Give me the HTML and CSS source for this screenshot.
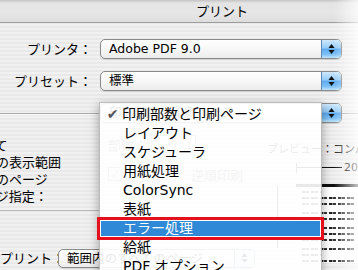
FILE: index.html
```html
<!DOCTYPE html>
<html lang="ja">
<head>
    <meta charset="UTF-8">
    <title>プリント</title>
    <link rel="stylesheet" href="styles.css">
</head>
<body>
    <div class="titlebar"><span class="title">プリント</span></div>

    <div class="form">
        <div class="row">
            <span class="label">プリンタ：</span>
            <div class="popup">
                <span class="popup-text">Adobe PDF 9.0</span>
                <span class="stepper">
                    <svg width="7" height="12" viewBox="0 0 7 12"><path d="M0.5 5 L3.5 1 L6.5 5 Z M0.5 7 L3.5 11 L6.5 7 Z" fill="#111"/></svg>
                </span>
            </div>
        </div>
        <div class="row">
            <span class="label">プリセット：</span>
            <div class="popup">
                <span class="popup-text">標準</span>
                <span class="stepper">
                    <svg width="7" height="12" viewBox="0 0 7 12"><path d="M0.5 5 L3.5 1 L6.5 5 Z M0.5 7 L3.5 11 L6.5 7 Z" fill="#111"/></svg>
                </span>
            </div>
        </div>
        <div class="row row-pane">
            <span class="label"></span>
            <div class="popup">
                <span class="popup-text">印刷部数と印刷ページ</span>
                <span class="stepper">
                    <svg width="7" height="12" viewBox="0 0 7 12"><path d="M0.5 5 L3.5 1 L6.5 5 Z M0.5 7 L3.5 11 L6.5 7 Z" fill="#111"/></svg>
                </span>
            </div>
        </div>
    </div>

    <div class="panel">
        <div class="ranges">
            <div>すべて</div>
            <div>現在の表示範囲</div>
            <div>現在のページ</div>
            <div>ページ指定：</div>
        </div>

        <div class="copies">
            <div class="copies-row"><span>部数：</span><span class="field">1</span></div>
            <div class="copies-row"><span class="checkbox">✓</span><span>丁合い</span><span class="spacer"></span><span>逆順印刷</span></div>
        </div>

        <div class="preview">
            <div class="preview-label">プレビュー：コンパクト</div>
            <div class="dim-h"><span class="dim-line"></span><span class="dim-text">209.9 mm</span></div>
            <div class="sheet">
                <div class="dim-v"></div>
                <div class="page">
                    <div class="txt short"></div>
                    <div class="txt"></div>
                    <div class="txt gap"></div>
                    <div class="txt"></div>
                    <div class="txt gap"></div>
                    <div class="txt"></div>
                    <div class="txt"></div>
                    <div class="txt gap"></div>
                    <div class="txt"></div>
                    <div class="txt short"></div>
                    <div class="txt gap"></div>
                    <div class="txt"></div>
                </div>
            </div>
        </div>

        <div class="print-row">
            <span class="label">プリント：</span>
            <div class="popup popup-wide">
                <span class="popup-text">範囲内のすべてのページ</span>
                <span class="stepper ghost">
                    <svg width="7" height="12" viewBox="0 0 7 12"><path d="M0.5 5 L3.5 1 L6.5 5 Z M0.5 7 L3.5 11 L6.5 7 Z" fill="#111"/></svg>
                </span>
            </div>
        </div>
    </div>

    <div class="menu">
        <div class="menu-item"><span class="check">✔</span>印刷部数と印刷ページ</div>
        <div class="menu-item">レイアウト</div>
        <div class="menu-item">スケジューラ</div>
        <div class="menu-item">用紙処理</div>
        <div class="menu-item">ColorSync</div>
        <div class="menu-item">表紙</div>
        <div class="menu-item active">エラー処理</div>
        <div class="menu-item">給紙</div>
        <div class="menu-item">PDF オプション</div>
    </div>
</body>
</html>
```

FILE: styles.css
```css
body {
    margin: 0;
    width: 358px;
    height: 270px;
    overflow: hidden;
    position: relative;
    font-family: "DejaVu Sans", "Noto Sans CJK JP", sans-serif;
    color: #000;
    background: repeating-linear-gradient(to bottom, #f1f1f1 0, #f1f1f1 2px, #e9e9e9 2px, #e9e9e9 4px);
}
body::after {
    content: "";
    position: absolute;
    top: 0;
    right: 0;
    width: 24px;
    height: 100%;
    background: linear-gradient(to right, rgba(255,255,255,0), rgba(255,255,255,0.75));
}
.titlebar {
    height: 22px;
    border-bottom: 1px solid #9d9d9d;
    background: linear-gradient(#c4c4c4 0, #e4e4e4 3px, #e6e6e6 60%, #dedede 100%);
}
.title {
    display: block;
    margin-left: 196px;
    font-size: 13px;
    line-height: 22px;
    font-family: "Noto Sans CJK JP", sans-serif;
}
.form {
    display: flex;
    flex-direction: column;
    gap: 12px;
    padding-top: 16px;
}
.row {
    display: grid;
    grid-template-columns: 92px 242px;
    column-gap: 8px;
    align-items: center;
}
.row-pane {
    background: linear-gradient(transparent 10px, #a9a9a9 10px, #a9a9a9 11px, #fbfbfb 11px, #fbfbfb 12px, transparent 12px);
}
.label {
    text-align: right;
    font-size: 13px;
    line-height: 20px;
    font-family: "Noto Sans CJK JP", sans-serif;
    white-space: nowrap;
}
.popup {
    height: 20px;
    box-sizing: border-box;
    border: 1px solid #8a8a8a;
    border-radius: 5px;
    background: linear-gradient(#ffffff, #f7f7f7 50%, #ececec);
    display: flex;
    align-items: stretch;
    overflow: hidden;
    box-shadow: 0 1px 1px rgba(0,0,0,0.12);
}
.popup-text {
    flex: 1;
    padding-left: 8px;
    font-size: 12.5px;
    line-height: 18px;
    white-space: nowrap;
}
.stepper {
    width: 19px;
    border-left: 1px solid #5d87b5;
    background: linear-gradient(#cfe8fc 0, #94cbf6 45%, #5ea9ee 50%, #7cc0f6 80%, #bfe6fd 100%);
    display: flex;
    align-items: center;
    justify-content: center;
}
.panel {
    display: grid;
    grid-template-columns: 100px 162px 96px;
    grid-template-rows: 75px auto;
    padding-top: 13px;
}
.ranges {
    grid-column: 1;
    grid-row: 1;
    margin-left: -30px;
    margin-right: -60px;
    font-size: 13px;
    line-height: 17px;
    font-family: "Noto Sans CJK JP", sans-serif;
    white-space: nowrap;
    padding-bottom: 6px;
    border-bottom: 1px solid #b9b9b9;
}
.copies {
    grid-column: 2;
    grid-row: 1;
    padding: 0 0 0 8px;
    font-size: 13px;
    font-family: "Noto Sans CJK JP", sans-serif;
    color: #777;
}
.copies-row {
    display: flex;
    align-items: center;
    gap: 4px;
    height: 16px;
    margin-bottom: 14px;
}
.field {
    width: 40px;
    height: 16px;
    border: 1px solid #aaa;
    background: #fff;
    text-align: right;
    padding-right: 3px;
    font-size: 11px;
    line-height: 16px;
}
.checkbox {
    width: 12px;
    height: 12px;
    border: 1px solid #999;
    font-size: 10px;
    line-height: 12px;
    text-align: center;
}
.spacer {
    width: 18px;
}
.preview {
    grid-column: 3;
    grid-row: 1 / 3;
    white-space: nowrap;
}
.preview-label {
    margin-top: 5px;
    padding-left: 5px;
    font-size: 11px;
    line-height: 14px;
    font-family: "Noto Sans CJK JP", sans-serif;
    color: #222;
}
.dim-h {
    display: flex;
    align-items: center;
    margin: 8px 0 0 34px;
    height: 10px;
}
.dim-line {
    flex-shrink: 0;
    width: 45px;
    height: 10px;
    border-left: 1px solid #333;
    background: linear-gradient(transparent 4px, #111 4px, #111 5px, transparent 5px);
}
.dim-text {
    flex-shrink: 0;
    padding-left: 2px;
    font-size: 11px;
    line-height: 10px;
}
.sheet {
    display: flex;
    margin-top: 11px;
}
.dim-v {
    width: 34px;
    height: 62px;
    margin-top: 2px;
    background: linear-gradient(to right, transparent 15px, #333 15px, #333 16px, transparent 16px);
}
.page {
    flex: 1;
    height: 72px;
    background: #fff;
    border-top: 3px solid #111;
    padding: 4px 4px 0 6px;
    overflow: hidden;
}
.txt {
    height: 2px;
    margin-bottom: 4px;
    background: repeating-linear-gradient(to right, #222 0, #222 3px, #9a9a9a 3px, #9a9a9a 4px, #333 4px, #333 7px, transparent 7px, transparent 9px);
}
.txt.short {
    width: 20px;
}
.txt.gap {
    margin-bottom: 7px;
}
.print-row {
    grid-column: 1 / 3;
    grid-row: 2;
    display: grid;
    grid-template-columns: 56px 197px;
    column-gap: 2px;
    align-items: center;
    margin-top: 37px;
}
.popup-wide {
    height: 19px;
}
.stepper.ghost {
    background: linear-gradient(#e4f1fb, #c9e2f6);
}
.menu {
    position: absolute;
    left: 99px;
    top: 102px;
    width: 223px;
    height: 180px;
    box-sizing: border-box;
    padding-top: 2px;
    border: 1px solid rgba(110,110,110,0.45);
    background: rgba(255,255,255,0.91);
    box-shadow: 0 3px 10px rgba(0,0,0,0.35);
    font-size: 14px;
}
.menu-item {
    position: relative;
    height: 19px;
    line-height: 19px;
    padding-left: 23px;
    white-space: nowrap;
}
.check {
    display: inline-block;
    width: 19px;
    margin-left: -20px;
    text-align: center;
    color: #555;
    font-size: 14px;
}
.menu-item.active {
    background: #2f89d6;
    color: #fff;
}
.menu-item.active::after {
    content: "";
    position: absolute;
    top: -2px;
    bottom: -2px;
    left: -3px;
    right: -3px;
    border: 3px solid #e6101c;
    box-shadow: inset 0 0 0 1px #fff;
}
```
